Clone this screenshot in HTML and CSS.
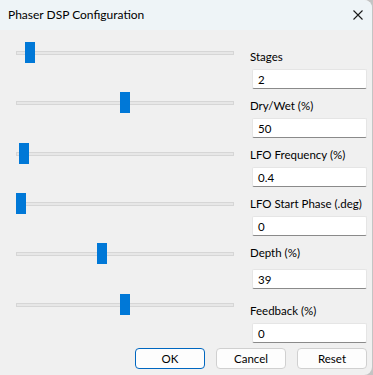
FILE: index.html
```html
<!DOCTYPE html>
<html lang="en">

<head>
    <meta charset="UTF-8">
    <meta name="viewport" content="width=device-width, initial-scale=1.0">
    <title>Phaser DSP Configuration</title>
    <link rel="stylesheet" href="styles.css">
</head>

<body>
<div class="dialog">
    <div class="titlebar">
        <span class="title">Phaser DSP Configuration</span>
        <svg class="close" width="10" height="10" viewBox="0 0 10 10">
            <path d="M0.5 0.5 L9.5 9.5 M9.5 0.5 L0.5 9.5" stroke="#1a1a1a" stroke-width="1.1" fill="none"/>
        </svg>
    </div>

    <div class="content">
        <div class="sliders">
            <div class="slider"><div class="track"></div><div class="thumb" style="left: 9px"></div></div>
            <div class="slider"><div class="track"></div><div class="thumb" style="left: 104px"></div></div>
            <div class="slider"><div class="track"></div><div class="thumb" style="left: 3px"></div></div>
            <div class="slider"><div class="track"></div><div class="thumb" style="left: 0px"></div></div>
            <div class="slider"><div class="track"></div><div class="thumb" style="left: 81px"></div></div>
            <div class="slider"><div class="track"></div><div class="thumb" style="left: 104px"></div></div>
        </div>

        <div class="fields">
            <div class="field">
                <label>Stages</label>
                <div class="input">2</div>
            </div>
            <div class="field">
                <label>Dry/Wet (%)</label>
                <div class="input">50</div>
            </div>
            <div class="field">
                <label>LFO Frequency (%)</label>
                <div class="input">0.4</div>
            </div>
            <div class="field">
                <label>LFO Start Phase (.deg)</label>
                <div class="input">0</div>
            </div>
            <div class="field field-depth">
                <label>Depth (%)</label>
                <div class="input">39</div>
            </div>
            <div class="field field-feedback">
                <label>Feedback (%)</label>
                <div class="input">0</div>
            </div>
        </div>
    </div>

    <div class="buttons">
        <button class="btn btn-default">OK</button>
        <button class="btn">Cancel</button>
        <button class="btn">Reset</button>
    </div>
</div>
</body>

</html>
```

FILE: styles.css
```css
html, body {
    margin: 0;
    height: 100%;
    overflow: hidden;
    background-color: #c4c4c4;
}

body {
    font-family: Lato, "Segoe UI", sans-serif;
    font-size: 11.5px;
    line-height: 16px;
    color: #000;
}

.dialog {
    width: 372px;
    height: 375px;
    background-color: #f0f0f0;
    border-radius: 0 8px 8px 0;
    overflow: hidden;
    display: flex;
    flex-direction: column;
}

.titlebar {
    height: 30px;
    background-color: #eef4f7;
    display: flex;
    align-items: center;
    justify-content: space-between;
    padding: 0 9px 0 8px;
    flex-shrink: 0;
}

.title {
    font-size: 12px;
    white-space: nowrap;
}

.close {
    display: block;
}

.content {
    display: flex;
}

/* left column with the trackbars */
.sliders {
    width: 218px;
    margin-left: 16px;
    padding-top: 12px;
    display: flex;
    flex-direction: column;
    gap: 29px;
}

.slider {
    position: relative;
    height: 21px;
}

.slider:nth-child(3n) {
    margin-top: 1px;
}

.track {
    position: absolute;
    left: 0;
    right: 0;
    top: 9px;
    height: 2px;
    background-color: #e7e7e7;
    border: 1px solid #d6d6d6;
}

.thumb {
    position: absolute;
    top: 0;
    width: 10px;
    height: 21px;
    background-color: #0078d7;
}

/* right column with labels and edit boxes */
.fields {
    width: 117px;
    margin-left: 16px;
    padding-top: 19px;
    display: flex;
    flex-direction: column;
    gap: 9px;
}

.field label {
    display: block;
    height: 16px;
    margin-bottom: 4px;
    white-space: nowrap;
}

.field-depth label {
    margin-bottom: 8px;
}

.field-feedback {
    margin-top: 5px;
}

.input {
    margin-left: 2px;
    box-sizing: border-box;
    height: 20px;
    padding: 1px 5px 0;
    background-color: #fff;
    border: 1px solid #e5e5e5;
    border-bottom-color: #8a8a8a;
    border-radius: 2px;
    line-height: 17px;
}

.buttons {
    display: flex;
    justify-content: flex-end;
    gap: 11px;
    padding: 5px 5px 0 0;
}

.btn {
    width: 70px;
    height: 21px;
    padding: 0;
    font-family: inherit;
    font-size: 11.5px;
    color: #000;
    background-color: #fdfdfd;
    border: 1px solid #d0d0d0;
    border-radius: 4px;
}

.btn-default {
    border-color: #0067c0;
}
```
